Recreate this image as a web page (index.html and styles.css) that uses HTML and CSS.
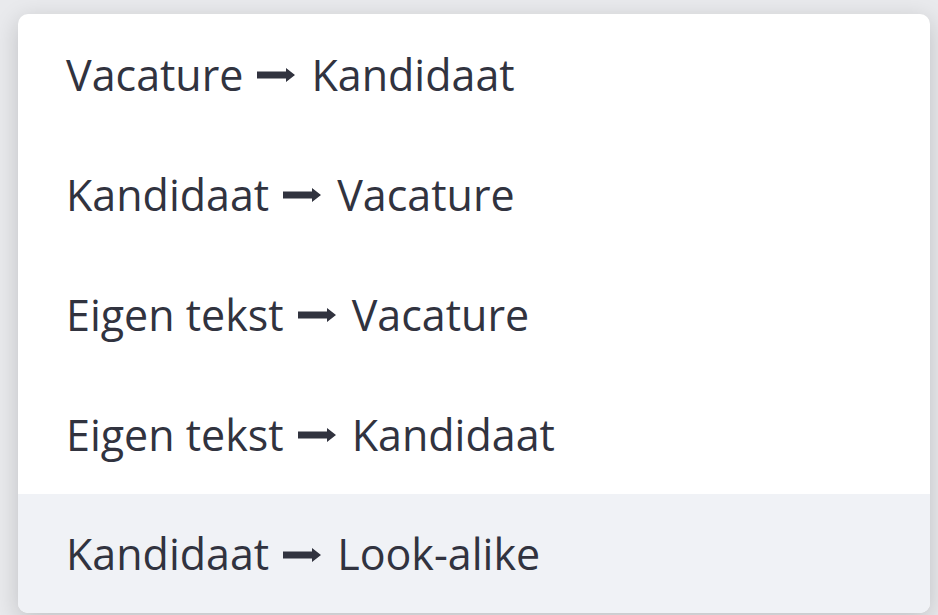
FILE: index.html
```html
<!DOCTYPE html>
<html lang="nl">
<head>
    <meta charset="UTF-8">
    <meta name="viewport" content="width=device-width, initial-scale=1.0">
    <title>Zoekrichting</title>
    <link rel="stylesheet" href="styles.css">
</head>
<body>
    <ul class="menu" role="listbox">
        <li class="option" role="option">
            <span>Vacature</span>
            <svg class="arrow" viewBox="0 0 38 14" aria-hidden="true"><path d="M0 3.5H29V0L38 7L29 14V10.5H0Z"/></svg>
            <span>Kandidaat</span>
        </li>
        <li class="option" role="option">
            <span>Kandidaat</span>
            <svg class="arrow" viewBox="0 0 38 14" aria-hidden="true"><path d="M0 3.5H29V0L38 7L29 14V10.5H0Z"/></svg>
            <span>Vacature</span>
        </li>
        <li class="option" role="option">
            <span>Eigen tekst</span>
            <svg class="arrow" viewBox="0 0 38 14" aria-hidden="true"><path d="M0 3.5H29V0L38 7L29 14V10.5H0Z"/></svg>
            <span>Vacature</span>
        </li>
        <li class="option" role="option">
            <span>Eigen tekst</span>
            <svg class="arrow" viewBox="0 0 38 14" aria-hidden="true"><path d="M0 3.5H29V0L38 7L29 14V10.5H0Z"/></svg>
            <span>Kandidaat</span>
        </li>
        <li class="option hover" role="option" aria-selected="true">
            <span>Kandidaat</span>
            <svg class="arrow" viewBox="0 0 38 14" aria-hidden="true"><path d="M0 3.5H29V0L38 7L29 14V10.5H0Z"/></svg>
            <span>Look-alike</span>
        </li>
    </ul>
</body>
</html>
```

FILE: styles.css
```css
* {
    margin: 0;
    padding: 0;
    box-sizing: border-box;
}

body {
    font-family: 'Open Sans', 'Noto Sans', sans-serif;
    background: #e9eaed;
    min-height: 100vh;
    padding: 14px 8px 0 18px;
}

.menu {
    list-style: none;
    width: 912px;
    background: white;
    border-radius: 10px;
    overflow: hidden;
    box-shadow: 0 6px 24px rgba(0, 0, 0, 0.18);
}

.option {
    display: flex;
    align-items: center;
    height: 120px;
    padding: 0 48px;
    font-size: 43px;
    color: #31333f;
    cursor: pointer;
}

.option:last-child {
    height: 119px;
}

.option.hover {
    background: #f0f2f6;
}

.arrow {
    width: 38px;
    height: 14px;
    margin: 2px 16px 0 14px;
    fill: #31333f;
}
```
